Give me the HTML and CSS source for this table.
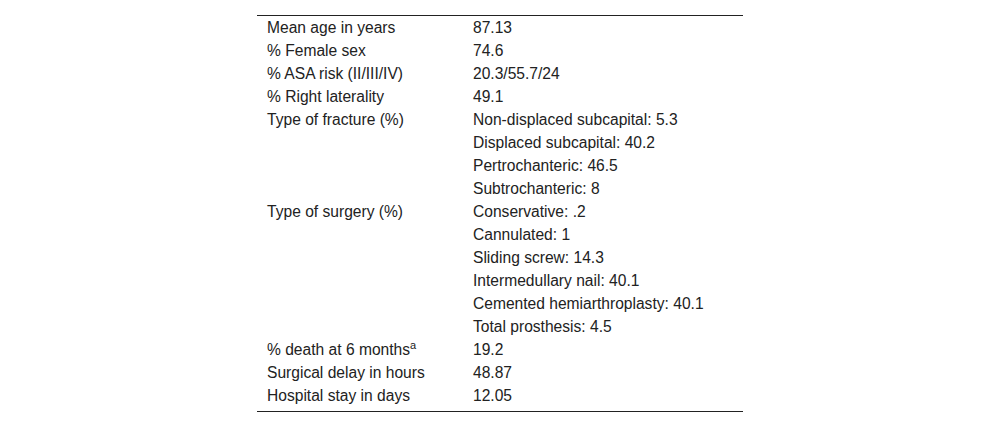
FILE: index.html
```html
<!DOCTYPE html>
<html>
<head>
<meta charset="utf-8">
<link rel="stylesheet" href="styles.css">
</head>
<body>
<div class="wrap">
<table class="data">
<tbody>
<tr><td class="k">Mean age in years</td><td>87.13</td></tr>
<tr><td class="k">% Female sex</td><td>74.6</td></tr>
<tr><td class="k">% ASA risk (II/III/IV)</td><td>20.3/55.7/24</td></tr>
<tr><td class="k">% Right laterality</td><td>49.1</td></tr>
<tr><td class="k">Type of fracture (%)</td><td>Non-displaced subcapital: 5.3</td></tr>
<tr><td class="k"></td><td>Displaced subcapital: 40.2</td></tr>
<tr><td class="k"></td><td>Pertrochanteric: 46.5</td></tr>
<tr><td class="k"></td><td>Subtrochanteric: 8</td></tr>
<tr><td class="k">Type of surgery (%)</td><td>Conservative: .2</td></tr>
<tr><td class="k"></td><td>Cannulated: 1</td></tr>
<tr><td class="k"></td><td>Sliding screw: 14.3</td></tr>
<tr><td class="k"></td><td>Intermedullary nail: 40.1</td></tr>
<tr><td class="k"></td><td>Cemented hemiarthroplasty: 40.1</td></tr>
<tr><td class="k"></td><td>Total prosthesis: 4.5</td></tr>
<tr><td class="k">% death at 6 months<sup class="sup">a</sup></td><td>19.2</td></tr>
<tr><td class="k">Surgical delay in hours</td><td>48.87</td></tr>
<tr><td class="k">Hospital stay in days</td><td>12.05</td></tr>
</tbody>
</table>
</div>
</body>
</html>
```
FILE: styles.css
```css
html, body {
  margin: 0;
  padding: 0;
  background: #ffffff;
}
body {
  font-family: "Liberation Sans", Arial, sans-serif;
  font-size: 15.6px;
  color: #222222;
}
.wrap {
  display: flex;
  justify-content: center;
  padding-top: 15px;
}
.data {
  width: 486px;
  border-collapse: collapse;
  border-top: 1px solid #222222;
  border-bottom: 1px solid #222222;
  table-layout: fixed;
}
.data tbody::after {
  content: "";
  display: block;
  height: 4px;
}
.data td {
  padding: 0 10px;
  height: 23px;
  line-height: 23px;
  vertical-align: top;
  white-space: nowrap;
}
.data td.k {
  width: 186px;
}
.sup {
  font-size: 11px;
  line-height: 0;
  vertical-align: 6px;
}
```
